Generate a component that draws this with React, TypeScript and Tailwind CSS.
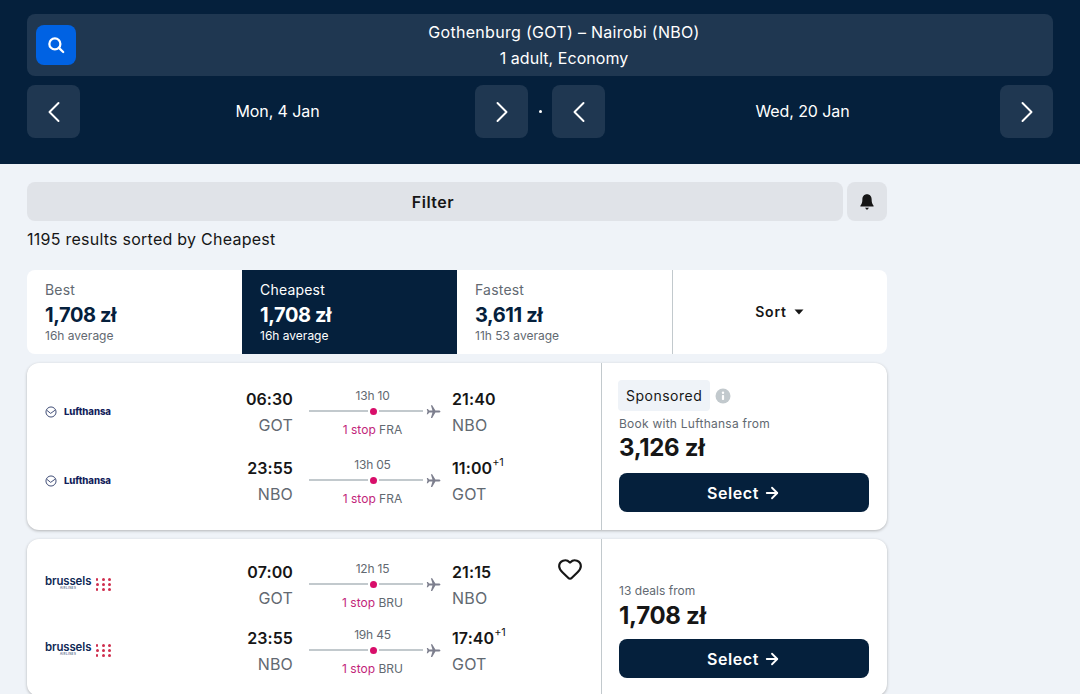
import React from 'react';
import { ChevronLeft, ChevronRight, Heart, ArrowRight } from 'lucide-react';

// Ícones desenhados à mão
const SearchIcon = () => (
  <svg viewBox="0 0 16 16" className="w-[18px] h-[18px]" fill="none" stroke="white" strokeWidth="2" strokeLinecap="round">
    <circle cx="7" cy="7" r="4.9" />
    <path d="M10.8 10.8 14.4 14.2" />
  </svg>
);

const BellIcon = () => (
  <svg viewBox="0 0 16 16" className="w-[18px] h-[18px]" fill="#161616">
    <path d="M8 1C5.4 1 3.9 3 3.9 5.4c0 3-.6 4.6-1.6 5.6-.4.4-.3 1 .3 1h10.8c.6 0 .7-.6.3-1-1-1-1.6-2.6-1.6-5.6C12.1 3 10.6 1 8 1Z" />
    <path d="M6.2 13.2h3.6L8 15Z" />
  </svg>
);

const PlaneIcon = () => (
  <svg viewBox="0 0 16 16" className="w-[15px] h-[15px] shrink-0" fill="#7d7f8e">
    <path d="M15.4 8c0-.6-.9-1.1-2-1.1H10L6.6 1.2H5.2L6.9 6.9H3.4L2 5.2H.8L1.6 8 .8 10.8H2l1.4-1.7h3.5L5.2 14.8h1.4L10 9.1h3.4c1.1 0 2-.5 2-1.1Z" />
  </svg>
);

const InfoIcon = () => (
  <svg viewBox="0 0 16 16" className="w-4 h-4">
    <circle cx="8" cy="8" r="7.5" fill="#c2c9cd" />
    <circle cx="8" cy="4.8" r="1.2" fill="white" />
    <rect x="6.9" y="7" width="2.2" height="5" rx="0.8" fill="white" />
  </svg>
);

const LufthansaLogo = () => (
  <div className="flex items-center gap-[7px]">
    <svg viewBox="0 0 14 14" className="w-3 h-3 opacity-80" fill="none" stroke="#05164d" strokeWidth="1.1">
      <circle cx="7" cy="7" r="5.9" />
      <path d="M2.4 5.2 6.6 8.6 11.6 5" />
    </svg>
    <span className="text-[9.6px] leading-none font-extrabold text-[#141f5c] tracking-[-0.1px]">Lufthansa</span>
  </div>
);

const dots = [2.4, 3, 3.6, 3, 3.6, 3.6, 2.4, 3, 3];

const BrusselsLogo = () => (
  <div className="flex items-center gap-[4px] -mt-[3px]">
    <div className="flex flex-col items-center">
      <span className="text-[11.4px] leading-[10px] font-semibold text-[#0f2a55] tracking-[-0.1px]">brussels</span>
      <span className="text-[3px] leading-[5px] text-[#0f2a55] tracking-[0.4px]">AIRLINES</span>
    </div>
    <div className="grid grid-cols-3 gap-x-[2px] gap-y-[1px] mt-[2px]">
      {dots.map((s, i) => (
        <div key={i} className="w-[4px] h-[4px] flex items-center justify-center">
          <span className="rounded-full bg-[#cf2e4e] block" style={{ width: s, height: s }} />
        </div>
      ))}
    </div>
  </div>
);

const Tab = ({ label, price, sub, active = false }: { label: string; price: string; sub: string; active?: boolean }) => (
  <div className={`w-[215px] pl-[18px] pt-[12px] ${active ? 'bg-[#05203c] text-white' : 'text-[#05203c]'}`}>
    <div className={`text-[14px] leading-[16px] tracking-[0.2px] ${active ? '' : 'text-[#626971]'}`}>{label}</div>
    <div className="text-[20px] leading-[26px] font-bold tracking-[-0.4px] mt-[4px]">{price}</div>
    <div className={`text-[12px] leading-[14px] tracking-[0px] mt-[1px] ${active ? '' : 'text-[#626971]'}`}>{sub}</div>
  </div>
);

interface LegProps {
  logo: React.ReactNode;
  dep: string;
  from: string;
  dur: string;
  stop: string;
  arr: string;
  plus?: boolean;
  to: string;
}

const Leg = ({ logo, dep, from, dur, stop, arr, plus, to }: LegProps) => (
  <div className="flex items-center h-[46px]">
    <div className="w-[176px] shrink-0">{logo}</div>
    <div className="w-[72px] shrink-0 text-right flex flex-col gap-[6px]">
      <div className="text-[16px] leading-[20px] font-semibold text-[#161616] tracking-[0.1px]">{dep}</div>
      <div className="text-[16px] leading-[20px] text-[#626971] tracking-[0.2px]">{from}</div>
    </div>
    <div className="w-[132px] ml-[16px] shrink-0 self-start">
      <div className="w-[127px] text-center text-[12px] leading-[14px] text-[#626971] tracking-[-0.2px]">{dur}</div>
      <div className="flex items-center h-[14px] mt-[1px]">
        <div className="w-[115px] flex items-center">
          <div className="h-[2px] w-[59px] bg-[#c2c9cd]" />
          <div className="w-[7px] h-[7px] mx-[2px] rounded-full bg-[#d80e6a]" />
          <div className="h-[2px] grow bg-[#c2c9cd]" />
        </div>
        <div className="ml-[3px] flex"><PlaneIcon /></div>
      </div>
      <div className="w-[127px] text-center text-[12px] leading-[14px] mt-[5px] tracking-[0px]">
        <span className="text-[#c2257a]">1 stop</span> <span className="text-[#626971]">{stop}</span>
      </div>
    </div>
    <div className="ml-[11px] flex flex-col gap-[6px]">
      <div className="text-[16px] leading-[20px] font-semibold text-[#161616] tracking-[0.1px]">
        {arr}
        {plus && <sup className="text-[11px] font-normal leading-none -top-[8px] tracking-[-0.3px]">+1</sup>}
      </div>
      <div className="text-[16px] leading-[20px] text-[#626971] tracking-[0.2px]">{to}</div>
    </div>
  </div>
);

const SelectButton = () => (
  <div className="h-[39px] bg-[#05203c] rounded-lg flex items-center justify-center gap-[4px] text-white text-[16px] font-semibold tracking-[0.55px]">
    Select <ArrowRight className="w-[18px] h-[18px]" strokeWidth={2.4} />
  </div>
);

const NavButton = ({ children }: { children: React.ReactNode }) => (
  <div className="w-[53px] h-[53px] shrink-0 rounded-lg bg-[#1f3751] flex items-center justify-center">{children}</div>
);

export default function App() {
  return (
    <div className="h-screen overflow-hidden bg-[#eff3f8] font-['Inter',sans-serif]">
      {/* Cabeçalho */}
      <div className="h-[164px] bg-[#05203c] px-[27px] pt-[14px] text-white">
        <div className="h-[62px] rounded-lg bg-[#1f3751] relative flex flex-col items-center justify-center pl-[48px] text-[16px] leading-[26px]">
          <div className="absolute left-[9px] top-[11px] w-10 h-10 rounded-lg bg-[#0062e3] flex items-center justify-center">
            <SearchIcon />
          </div>
          <div className="tracking-[0.3px]">Gothenburg (GOT) – Nairobi (NBO)</div>
          <div className="tracking-[0.05px]">1 adult, Economy</div>
        </div>
        <div className="flex items-center mt-[9px]">
          <NavButton><ChevronLeft className="w-9 h-9" strokeWidth={1.3} /></NavButton>
          <div className="flex-1 text-center text-[16px] leading-[20px] -mt-[1px] tracking-[-0.1px]">Mon, 4 Jan</div>
          <NavButton><ChevronRight className="w-9 h-9" strokeWidth={1.3} /></NavButton>
          <div className="w-[24px] flex justify-center"><div className="w-[3px] h-[3px] rounded-full bg-white" /></div>
          <NavButton><ChevronLeft className="w-9 h-9" strokeWidth={1.3} /></NavButton>
          <div className="flex-1 text-center text-[16px] leading-[20px] -mt-[1px] tracking-[-0.1px]">Wed, 20 Jan</div>
          <NavButton><ChevronRight className="w-9 h-9" strokeWidth={1.3} /></NavButton>
        </div>
      </div>

      {/* Resultados */}
      <div className="w-[860px] ml-[27px] pt-[18px]">
        <div className="flex gap-[4px]">
          <div className="grow h-[39px] rounded-lg bg-[#e0e3e8] flex items-center justify-center pr-[4px] text-[16px] font-semibold text-[#161616] tracking-[0.5px]">Filter</div>
          <div className="w-[40px] h-[39px] rounded-lg bg-[#e0e3e8] flex items-center justify-center"><BellIcon /></div>
        </div>
        <div className="mt-[8px] text-[16px] leading-[20px] text-[#161616] tracking-[0.25px]">1195 results sorted by Cheapest</div>

        <div className="mt-[21px] h-[84px] bg-white rounded-lg overflow-hidden flex">
          <Tab label="Best" price="1,708 zł" sub="16h average" />
          <Tab label="Cheapest" price="1,708 zł" sub="16h average" active />
          <Tab label="Fastest" price="3,611 zł" sub="11h 53 average" />
          <div className="grow border-l border-[#c2c9cd] flex items-center justify-center gap-[7px] pb-[1px] pr-[1px] text-[14px] font-semibold text-[#161616] tracking-[0.8px]">
            Sort
            <svg viewBox="0 0 10 6" className="w-[10px] h-[6px]" fill="#161616"><path d="M0.5 0.5h9L5 5.5Z" /></svg>
          </div>
        </div>

        {/* Cartão 1 */}
        <div className="mt-[9px] h-[167px] bg-white rounded-xl shadow-[0_1px_3px_rgba(37,32,31,0.3)] flex">
          <div className="w-[574px] shrink-0 pl-[18px] pt-[26px] flex flex-col gap-[23px]">
            <Leg logo={<LufthansaLogo />} dep="06:30" from="GOT" dur="13h 10" stop="FRA" arr="21:40" to="NBO" />
            <Leg logo={<LufthansaLogo />} dep="23:55" from="NBO" dur="13h 05" stop="FRA" arr="11:00" plus to="GOT" />
          </div>
          <div className="grow border-l border-[#c2c9cd] pl-[17px] pr-[18px] pb-[18px] flex flex-col justify-end">
            <div className="flex items-center gap-[5px] -ml-[1px]">
              <div className="h-[31px] px-[8px] rounded bg-[#eff3f8] flex items-center text-[14px] text-[#161616] tracking-[0.5px]">Sponsored</div>
              <InfoIcon />
            </div>
            <div className="mt-[6px] text-[12px] leading-[14px] text-[#626971] tracking-[0.25px]">Book with Lufthansa from</div>
            <div className="mt-[2px] text-[24px] leading-[30px] font-bold text-[#161616] tracking-[-0.3px]">3,126 zł</div>
            <div className="mt-[10px]"><SelectButton /></div>
          </div>
        </div>

        {/* Cartão 2 */}
        <div className="mt-[9px] h-[157px] bg-white rounded-xl shadow-[0_1px_3px_rgba(37,32,31,0.3)] flex">
          <div className="w-[574px] shrink-0 pl-[18px] pt-[23px] flex flex-col gap-[20px] relative">
            <div className="absolute right-[18px] top-[17px]"><Heart className="w-[26px] h-[26px] text-[#161616]" strokeWidth={2} /></div>
            <Leg logo={<BrusselsLogo />} dep="07:00" from="GOT" dur="12h 15" stop="BRU" arr="21:15" to="NBO" />
            <Leg logo={<BrusselsLogo />} dep="23:55" from="NBO" dur="19h 45" stop="BRU" arr="17:40" plus to="GOT" />
          </div>
          <div className="grow border-l border-[#c2c9cd] pl-[17px] pr-[18px] pb-[18px] flex flex-col justify-end">
            <div className="text-[12px] leading-[14px] text-[#626971] tracking-[0.03px]">13 deals from</div>
            <div className="mt-[3px] text-[24px] leading-[30px] font-bold text-[#161616] tracking-[-0.3px]">1,708 zł</div>
            <div className="mt-[8px]"><SelectButton /></div>
          </div>
        </div>
      </div>
    </div>
  );
}
